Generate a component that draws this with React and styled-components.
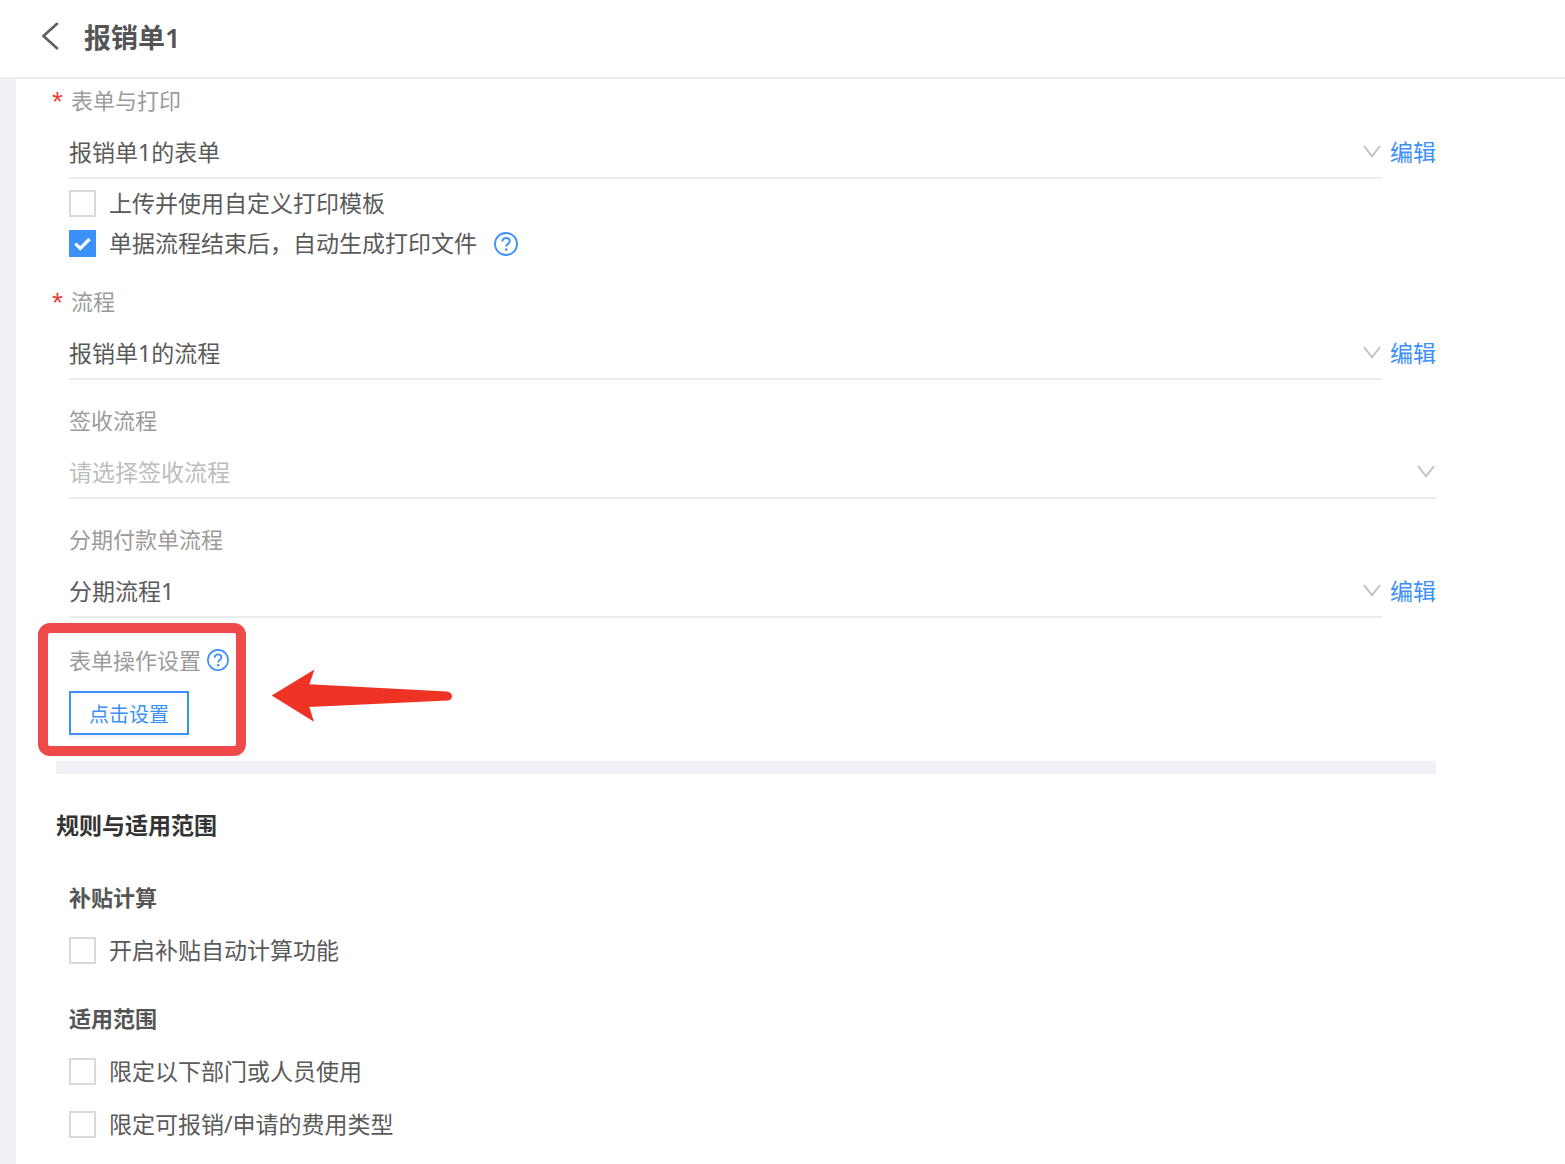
import React, { useId, useState } from "react";
import styled, { createGlobalStyle } from "styled-components";

const color = {
  blue: "#3b90fa",
  text: "#5a5a5a",
  title: "#555555",
  heading: "#333333",
  label: "#9b9b9b",
  placeholder: "#bdbdbd",
  line: "#ececec",
  box: "#d9d9d9",
  strip: "#f0f1f6",
  required: "#ea4035",
  frame: "#ed4a49",
  arrow: "#ee3224",
};

const GlobalStyle = createGlobalStyle`
  *, *::before, *::after { box-sizing: border-box; }
  body {
    margin: 0;
    background: #ffffff;
    color: ${color.text};
    font-family: "Noto Sans", "Noto Sans CJK SC", sans-serif;
    font-size: 23px;
    line-height: 28px;
  }
`;

const Page = styled.div`
  min-height: 100vh;
  display: flex;
  flex-direction: column;
`;

const Header = styled.header`
  display: flex;
  align-items: center;
  gap: 24px;
  height: 79px;
  padding: 0 40px 5px;
  border-bottom: 2px solid ${color.line};
`;

const BackButton = styled.button`
  display: flex;
  padding: 0;
  border: 0;
  background: none;
  color: #5e5e5e;
  cursor: pointer;
`;

const Title = styled.h1`
  margin: 0;
  padding-top: 4px;
  font-size: 27px;
  font-weight: 600;
  line-height: 36px;
  color: ${color.title};
`;

const Body = styled.main`
  flex: 1;
  border-left: 16px solid ${color.strip};
  padding: 8px 129px 26px 40px;
`;

const Section = styled.section`
  padding-left: 13px;
`;

const Field = styled.div`
  display: flex;
  flex-direction: column;
  gap: 12px;
  margin-bottom: ${(p) => (p.$last ? 28 : 27)}px;
`;

const FieldLabel = styled.label`
  display: flex;
  align-items: center;
  gap: 8px;
  height: 28px;
  padding-bottom: 2px;
  margin-left: ${(p) => (p.$required ? -17 : 0)}px;
  font-size: 22px;
  color: ${color.label};
`;

const Star = styled.span`
  padding-top: 4px;
  font-family: "Liberation Sans", sans-serif;
  font-size: 28px;
  color: ${color.required};
`;

const FieldRow = styled.div`
  display: flex;
  align-items: center;
  gap: 8px;
`;

const SelectWrap = styled.div`
  flex: 1;
  display: grid;
  align-items: center;
  border-bottom: 2px solid ${color.line};

  > * { grid-area: 1 / 1; }
  > svg {
    justify-self: end;
    margin: 0 1px 2px 0;
    pointer-events: none;
  }
`;

const Select = styled.select`
  appearance: none;
  width: 100%;
  height: 50px;
  padding: 0;
  border: 0;
  background: transparent;
  color: ${(p) => (p.$empty ? color.placeholder : color.text)};
  font: inherit;
  cursor: pointer;
`;

const EditLink = styled.a`
  padding-bottom: 2px;
  color: ${color.blue};
  text-decoration: none;
`;

const CheckList = styled.div`
  display: flex;
  flex-direction: column;
  gap: ${(p) => p.$gap}px;
  margin: ${(p) => p.$margin};
`;

const CheckLine = styled.div`
  display: flex;
  align-items: center;
  gap: 17px;
  height: 27px;
`;

const CheckLabel = styled.label`
  display: flex;
  align-items: center;
  gap: 13px;
  cursor: pointer;
`;

const CheckText = styled.span`
  padding-bottom: 2px;
`;

const BoxWrap = styled.span`
  display: grid;
  place-items: center;

  > * { grid-area: 1 / 1; }
  > svg { pointer-events: none; }
`;

const Box = styled.input`
  appearance: none;
  width: 27px;
  height: 27px;
  margin: 0;
  border: 2px solid ${color.box};
  background: #ffffff;

  &:checked {
    border-color: ${color.blue};
    background: ${color.blue};
  }
`;

const HelpButton = styled.button`
  display: flex;
  padding: 0;
  border: 0;
  background: none;
  color: ${color.blue};
  cursor: pointer;
`;

const Operation = styled.div`
  position: relative;
  display: flex;
  flex-direction: column;
  align-items: flex-start;
  gap: 17px;
  margin-bottom: 26px;
`;

const OperationLabel = styled.div`
  display: flex;
  align-items: center;
  gap: 6px;
  height: 28px;
  font-size: 22px;
  color: ${color.label};
`;

const SetButton = styled.button`
  height: 44px;
  padding: 4px 18px 0;
  border: 2px solid ${color.blue};
  background: #ffffff;
  box-shadow: 0 3px 0 #f4f4f4;
  color: ${color.blue};
  font: inherit;
  font-size: 20px;
  cursor: pointer;
`;

const Highlight = styled.div`
  position: absolute;
  top: -23px;
  left: -31px;
  width: 208px;
  height: 133px;
  border: 10px solid ${color.frame};
  border-radius: 12px;
  pointer-events: none;
`;

const Pointer = styled.svg`
  position: absolute;
  top: 22px;
  left: 202px;
  pointer-events: none;
`;

const Divider = styled.hr`
  height: 13px;
  margin: 0 0 35px;
  border: 0;
  background: ${color.strip};
`;

const Heading = styled.h2`
  margin: 0 0 42px;
  font-size: 23px;
  font-weight: 600;
  line-height: 32px;
  color: ${color.heading};
`;

const SubHeading = styled.h3`
  margin: 0;
  height: 28px;
  font-size: 22px;
  font-weight: 600;
  line-height: 28px;
  color: ${color.title};
`;

function Chevron() {
  return (
    <svg width="18" height="13" viewBox="0 0 18 13" fill="none" stroke="#bfbfbf" strokeWidth="1.8" aria-hidden="true">
      <path d="M1 1 9 11.2 17 1" />
    </svg>
  );
}

function Help({ size, label }) {
  return (
    <HelpButton type="button" aria-label={label}>
      <svg width={size} height={size} viewBox="0 0 24 24" fill="none" stroke="currentColor" aria-hidden="true">
        <circle cx="12" cy="12" r="11" strokeWidth="1.8" />
        <path d="M8.3 9.5c0-2.1 1.6-3.6 3.7-3.6s3.7 1.4 3.7 3.3c0 2.5-3.5 2.8-3.5 5.4" strokeWidth="2" />
        <circle cx="12.2" cy="17.6" r="1.3" fill="currentColor" stroke="none" />
      </svg>
    </HelpButton>
  );
}

function SelectField({ label, value, placeholder, required, editable, last }) {
  const id = useId();
  return (
    <Field $last={last}>
      <FieldLabel htmlFor={id} $required={required}>
        {required && <Star>*</Star>}
        {label}
      </FieldLabel>
      <FieldRow>
        <SelectWrap>
          <Select id={id} defaultValue={value || ""} $empty={!value}>
            <option value={value || ""}>{value || placeholder}</option>
          </Select>
          <Chevron />
        </SelectWrap>
        {editable && <EditLink href="#edit">编辑</EditLink>}
      </FieldRow>
    </Field>
  );
}

function Check({ label, initial = false, help }) {
  const [checked, setChecked] = useState(initial);
  return (
    <CheckLine>
      <CheckLabel>
        <BoxWrap>
          <Box type="checkbox" checked={checked} onChange={(e) => setChecked(e.target.checked)} />
          {checked && (
            <svg width="17" height="14" viewBox="0 0 17 14" fill="none" stroke="#ffffff" strokeWidth="3.2" aria-hidden="true">
              <path d="M1.4 6.6 6.2 11.4 15.6 2" />
            </svg>
          )}
        </BoxWrap>
        <CheckText>{label}</CheckText>
      </CheckLabel>
      {help && <Help size={24} label="说明" />}
    </CheckLine>
  );
}

export default function App() {
  return (
    <Page>
      <GlobalStyle />
      <Header>
        <BackButton type="button" aria-label="返回">
          <svg width="20" height="28" viewBox="0 0 20 28" fill="none" stroke="currentColor" strokeWidth="2.6" strokeLinecap="round" strokeLinejoin="round" aria-hidden="true">
            <path d="M17 1.8 3.4 14 17 26.2" />
          </svg>
        </BackButton>
        <Title>报销单1</Title>
      </Header>
      <Body>
        <Section>
          <SelectField label="表单与打印" value="报销单1的表单" required editable />
          <CheckList $gap={13} $margin="-16px 0 31px">
            <Check label="上传并使用自定义打印模板" />
            <Check label="单据流程结束后，自动生成打印文件" initial help />
          </CheckList>
          <SelectField label="流程" value="报销单1的流程" required editable />
          <SelectField label="签收流程" placeholder="请选择签收流程" />
          <SelectField label="分期付款单流程" value="分期流程1" editable last />
          <Operation>
            <OperationLabel>
              表单操作设置
              <Help size={22} label="表单操作设置说明" />
            </OperationLabel>
            <SetButton type="button">点击设置</SetButton>
            <Highlight />
            <Pointer width="182" height="54" viewBox="0 0 182 54" aria-hidden="true">
              <path
                d="M.7 27.5 43.5 1.5 38.3 16.2 176 23.4Q181 24.6 181 28.2 181 31.6 177 32.6L38.3 39 43 53.7Z"
                fill={color.arrow}
              />
            </Pointer>
          </Operation>
        </Section>
        <Divider />
        <Heading>规则与适用范围</Heading>
        <Section>
          <SubHeading>补贴计算</SubHeading>
          <CheckList $gap={26} $margin="26px 0 40px">
            <Check label="开启补贴自动计算功能" />
          </CheckList>
          <SubHeading>适用范围</SubHeading>
          <CheckList $gap={26} $margin="26px 0 0">
            <Check label="限定以下部门或人员使用" />
            <Check label="限定可报销/申请的费用类型" />
          </CheckList>
        </Section>
      </Body>
    </Page>
  );
}
